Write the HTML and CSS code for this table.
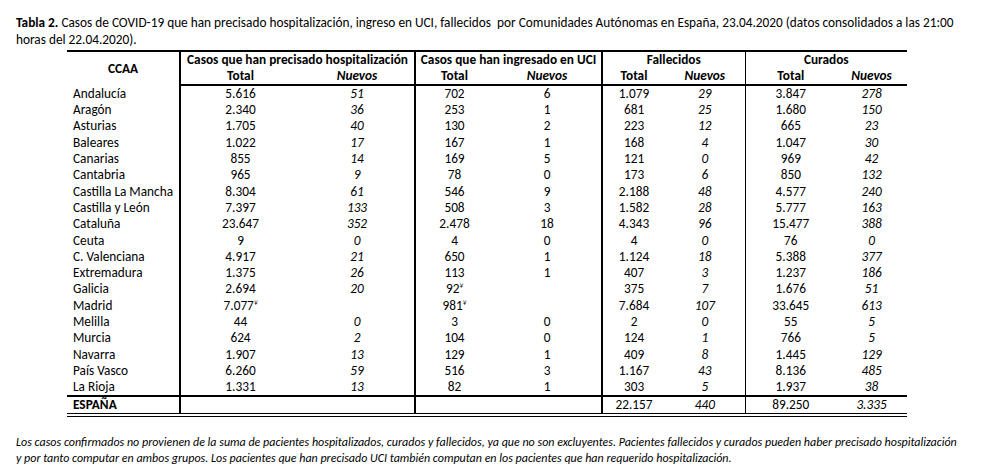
FILE: index.html
```html
<!DOCTYPE html>
<html lang="es">
<head>
<meta charset="utf-8">
<title>Tabla 2</title>
<link rel="stylesheet" href="styles.css">
</head>
<body>
<p class="title"><b>Tabla 2.</b> Casos de COVID-19 que han precisado hospitalización, ingreso en UCI, fallecidos&nbsp; por Comunidades Autónomas en España, 23.04.2020 (datos consolidados a las 21:00<br>horas del 22.04.2020).</p>
<table class="data">
  <colgroup>
    <col class="c-ccaa">
    <col class="c-ht"><col class="c-hn">
    <col class="c-ut"><col class="c-un">
    <col class="c-ft"><col class="c-fn">
    <col class="c-ct"><col class="c-cn">
  </colgroup>
  <thead>
    <tr class="h1">
      <th rowspan="2" class="sep2">CCAA</th>
      <th colspan="2" class="sep2">Casos que han precisado hospitalización</th>
      <th colspan="2" class="sep2">Casos que han ingresado en UCI</th>
      <th colspan="2" class="sep1">Fallecidos</th>
      <th colspan="2">Curados</th>
    </tr>
    <tr class="h2">
      <th>Total</th><th class="sep2"><i>Nuevos</i></th>
      <th>Total</th><th class="sep2"><i>Nuevos</i></th>
      <th>Total</th><th class="sep1"><i>Nuevos</i></th>
      <th>Total</th><th><i>Nuevos</i></th>
    </tr>
  </thead>
  <tbody>
    <tr><td class="name sep2">Andalucía</td><td>5.616</td><td class="it sep2">51</td><td>702</td><td class="sep2">6</td><td>1.079</td><td class="it sep1">29</td><td>3.847</td><td class="it">278</td></tr>
    <tr><td class="name sep2">Aragón</td><td>2.340</td><td class="it sep2">36</td><td>253</td><td class="sep2">1</td><td>681</td><td class="it sep1">25</td><td>1.680</td><td class="it">150</td></tr>
    <tr><td class="name sep2">Asturias</td><td>1.705</td><td class="it sep2">40</td><td>130</td><td class="sep2">2</td><td>223</td><td class="it sep1">12</td><td>665</td><td class="it">23</td></tr>
    <tr><td class="name sep2">Baleares</td><td>1.022</td><td class="it sep2">17</td><td>167</td><td class="sep2">1</td><td>168</td><td class="it sep1">4</td><td>1.047</td><td class="it">30</td></tr>
    <tr><td class="name sep2">Canarias</td><td>855</td><td class="it sep2">14</td><td>169</td><td class="sep2">5</td><td>121</td><td class="it sep1">0</td><td>969</td><td class="it">42</td></tr>
    <tr><td class="name sep2">Cantabria</td><td>965</td><td class="it sep2">9</td><td>78</td><td class="sep2">0</td><td>173</td><td class="it sep1">6</td><td>850</td><td class="it">132</td></tr>
    <tr><td class="name sep2">Castilla La Mancha</td><td>8.304</td><td class="it sep2">61</td><td>546</td><td class="sep2">9</td><td>2.188</td><td class="it sep1">48</td><td>4.577</td><td class="it">240</td></tr>
    <tr><td class="name sep2">Castilla y León</td><td>7.397</td><td class="it sep2">133</td><td>508</td><td class="sep2">3</td><td>1.582</td><td class="it sep1">28</td><td>5.777</td><td class="it">163</td></tr>
    <tr><td class="name sep2">Cataluña</td><td>23.647</td><td class="it sep2">352</td><td>2.478</td><td class="sep2">18</td><td>4.343</td><td class="it sep1">96</td><td>15.477</td><td class="it">388</td></tr>
    <tr><td class="name sep2">Ceuta</td><td>9</td><td class="it sep2">0</td><td>4</td><td class="sep2">0</td><td>4</td><td class="it sep1">0</td><td>76</td><td class="it">0</td></tr>
    <tr><td class="name sep2">C. Valenciana</td><td>4.917</td><td class="it sep2">21</td><td>650</td><td class="sep2">1</td><td>1.124</td><td class="it sep1">18</td><td>5.388</td><td class="it">377</td></tr>
    <tr><td class="name sep2">Extremadura</td><td>1.375</td><td class="it sep2">26</td><td>113</td><td class="sep2">1</td><td>407</td><td class="it sep1">3</td><td>1.237</td><td class="it">186</td></tr>
    <tr><td class="name sep2">Galicia</td><td>2.694</td><td class="it sep2">20</td><td>92<sup>¥</sup></td><td class="sep2"></td><td>375</td><td class="it sep1">7</td><td>1.676</td><td class="it">51</td></tr>
    <tr><td class="name sep2">Madrid</td><td>7.077<sup>¥</sup></td><td class="it sep2"></td><td>981<sup>¥</sup></td><td class="sep2"></td><td>7.684</td><td class="it sep1">107</td><td>33.645</td><td class="it">613</td></tr>
    <tr><td class="name sep2">Melilla</td><td>44</td><td class="it sep2">0</td><td>3</td><td class="sep2">0</td><td>2</td><td class="it sep1">0</td><td>55</td><td class="it">5</td></tr>
    <tr><td class="name sep2">Murcia</td><td>624</td><td class="it sep2">2</td><td>104</td><td class="sep2">0</td><td>124</td><td class="it sep1">1</td><td>766</td><td class="it">5</td></tr>
    <tr><td class="name sep2">Navarra</td><td>1.907</td><td class="it sep2">13</td><td>129</td><td class="sep2">1</td><td>409</td><td class="it sep1">8</td><td>1.445</td><td class="it">129</td></tr>
    <tr><td class="name sep2">País Vasco</td><td>6.260</td><td class="it sep2">59</td><td>516</td><td class="sep2">3</td><td>1.167</td><td class="it sep1">43</td><td>8.136</td><td class="it">485</td></tr>
    <tr><td class="name sep2">La Rioja</td><td>1.331</td><td class="it sep2">13</td><td>82</td><td class="sep2">1</td><td>303</td><td class="it sep1">5</td><td>1.937</td><td class="it">38</td></tr>
  </tbody>
  <tfoot>
    <tr><td class="name sep2"><b>ESPAÑA</b></td><td></td><td class="sep2"></td><td></td><td class="sep2"></td><td>22.157</td><td class="it sep1">440</td><td>89.250</td><td class="it">3.335</td></tr>
  </tfoot>
</table>
<p class="note">Los casos confirmados no provienen de la suma de pacientes hospitalizados, curados y fallecidos, ya que no son excluyentes. Pacientes fallecidos y curados pueden haber precisado hospitalización<br>y por tanto computar en ambos grupos. Los pacientes que han precisado UCI también computan en los pacientes que han requerido hospitalización.</p>
</body>
</html>
```
FILE: styles.css
```css
html, body {
  margin: 0;
  padding: 0;
  background: #fff;
}
body {
  font-family: Carlito, Calibri, Lato, "Liberation Sans", sans-serif;
  font-size: 13.3px;
  color: #000;
}
.title {
  margin: 0;
  padding: 14px 0 0 16px;
  line-height: 17px;
  white-space: nowrap;
}
.data {
  margin: 2px 0 0 67px;
  width: 840px;
  border-collapse: collapse;
  table-layout: fixed;
  border-top: 2px solid #000;
}
.c-ccaa { width: 113px; }
.c-ht { width: 120px; }
.c-hn { width: 115px; }
.c-ut { width: 78px; }
.c-un { width: 109px; }
.c-ft { width: 63px; }
.c-fn { width: 80px; }
.c-ct { width: 91px; }
.c-cn { width: 71px; }
.data th, .data td {
  padding: 0;
  text-align: center;
  white-space: nowrap;
  font-weight: normal;
}
.data th { font-weight: bold; }
.data thead tr { height: 16px; line-height: 16px; }
.data thead tr.h2 th { border-bottom: 2px solid #000; }
.data tbody tr { height: 16.3px; line-height: 16px; }
.data tbody tr:last-child td { border-bottom: 2px solid #000; }
.data tfoot tr { height: 16px; line-height: 16px; }
.data tfoot td { border-bottom: 4px double #000; }
.data td.name { text-align: left; padding-left: 6px; }
.sep2 { border-right: 2px solid #000; }
.sep1 { border-right: 1px solid #000; }
.it { font-style: italic; }
sup {
  font-size: 7px;
  line-height: 0;
  vertical-align: 5px;
  font-style: italic;
}
.note {
  margin: 0;
  padding: 17px 0 0 16px;
  font-style: italic;
  font-size: 12px;
  line-height: 16px;
  white-space: nowrap;
}
```
